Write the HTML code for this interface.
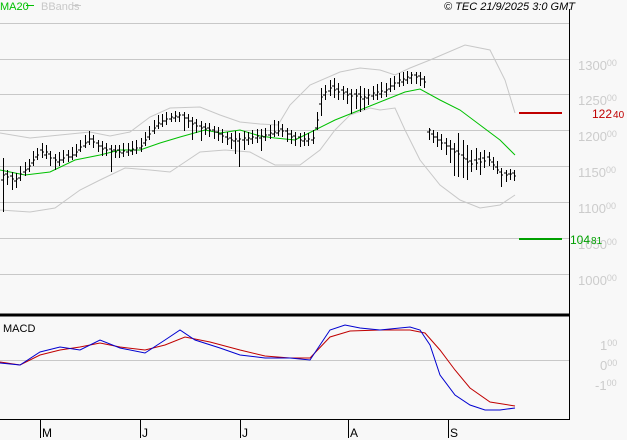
<!DOCTYPE html>
<html><head><meta charset="utf-8"><style>
html,body{margin:0;padding:0;background:#f8f8f8;}
svg{display:block;font-family:"Liberation Sans",sans-serif;}
</style></head><body>
<svg width="627" height="440" viewBox="0 0 627 440" xmlns="http://www.w3.org/2000/svg">
<rect width="627" height="440" fill="#f8f8f8"/>
<g stroke="#c8c8c8" stroke-width="1" shape-rendering="crispEdges">
<line x1="0" y1="23.5" x2="569" y2="23.5"/>
<line x1="0" y1="59.5" x2="569" y2="59.5"/>
<line x1="0" y1="94.5" x2="569" y2="94.5"/>
<line x1="0" y1="130.5" x2="569" y2="130.5"/>
<line x1="0" y1="166.5" x2="569" y2="166.5"/>
<line x1="0" y1="202.5" x2="569" y2="202.5"/>
<line x1="0" y1="238.5" x2="569" y2="238.5"/>
<line x1="0" y1="274.5" x2="569" y2="274.5"/>
<line x1="0" y1="360.5" x2="569" y2="360.5"/>
</g>
<g fill="#cccccc" font-size="13">
<text x="578" y="70">1300<tspan font-size="9" dy="-4">00</tspan></text>
<text x="578" y="105">1250<tspan font-size="9" dy="-4">00</tspan></text>
<text x="578" y="141">1200<tspan font-size="9" dy="-4">00</tspan></text>
<text x="578" y="177">1150<tspan font-size="9" dy="-4">00</tspan></text>
<text x="578" y="213">1100<tspan font-size="9" dy="-4">00</tspan></text>
<text x="578" y="249">1050<tspan font-size="9" dy="-4">00</tspan></text>
<text x="578" y="285">1000<tspan font-size="9" dy="-4">00</tspan></text>
<text x="600" y="350">1<tspan font-size="9" dy="-4">00</tspan></text>
<text x="600" y="370">0<tspan font-size="9" dy="-4">00</tspan></text>
<text x="595" y="390">-1<tspan font-size="9" dy="-4">00</tspan></text>
</g>
<text x="0" y="10" font-size="11" fill="#00c000">MA20</text>
<line x1="26" y1="5.5" x2="34" y2="5.5" stroke="#00c000"/>
<text x="41" y="10" font-size="11" fill="#c8c8c8">BBands</text>
<line x1="73" y1="5.5" x2="81" y2="5.5" stroke="#c8c8c8"/>
<text x="575" y="10" font-size="11" font-style="italic" fill="#000" text-anchor="end">© TEC 21/9/2025 3:0 GMT</text>
<line x1="569.5" y1="9" x2="569.5" y2="420" stroke="#000"/>
<line x1="0" y1="315" x2="570" y2="315" stroke="#000" stroke-width="3"/>
<line x1="0" y1="419.5" x2="570" y2="419.5" stroke="#000"/>
<text x="3" y="332" font-size="11" fill="#000">MACD</text>
<g stroke="#000"><line x1="40.5" y1="419" x2="40.5" y2="438"/><line x1="140.5" y1="419" x2="140.5" y2="438"/><line x1="240.5" y1="419" x2="240.5" y2="438"/><line x1="348.5" y1="419" x2="348.5" y2="438"/><line x1="448.5" y1="419" x2="448.5" y2="438"/></g>
<g font-size="12" fill="#000"><text x="42" y="437">M</text><text x="142" y="437">J</text><text x="242" y="437">J</text><text x="350" y="437">A</text><text x="450" y="437">S</text></g>
<line x1="519" y1="113" x2="562" y2="113" stroke="#c00000" stroke-width="2"/>
<text x="592" y="118" font-size="12" fill="#c00000">122<tspan font-size="10" dx="1">40</tspan></text>
<line x1="519" y1="239" x2="562" y2="239" stroke="#00a000" stroke-width="2"/>
<text x="570" y="244" font-size="12" fill="#00a000">104<tspan font-size="10" dx="1">81</tspan></text>
<polyline fill="none" stroke="#c8c8c8" points="0,133 30,138 60,135 90,132 110,136 130,132 150,117 170,108 200,107 220,115 240,122 260,124 278,125 290,105 310,85 340,72 360,68 380,70 395,75 410,68 430,60 465,45 490,50 505,80 515,113"/>
<polyline fill="none" stroke="#c8c8c8" points="0,210 30,212 55,208 80,190 100,180 125,168 150,170 170,172 200,152 225,150 250,152 265,160 275,165 300,165 320,150 335,130 350,115 370,108 380,110 395,108 405,130 420,160 440,185 460,200 480,208 500,205 515,195"/>
<polyline fill="none" stroke="#00c000" points="0,170 25,175 50,172 75,160 100,155 120,150 140,150 160,143 180,137 205,130 220,133 240,130 260,136 275,138 295,140 315,130 335,120 360,110 385,100 405,92 420,89 440,100 460,110 480,125 500,140 515,155"/>
<path fill="none" stroke="#000" stroke-width="1" shape-rendering="crispEdges" d="
M3.5 158V212M1 180h2M3 175h2
M7.5 170V185M5 174h2M7 177h2
M12.5 172V190M10 176h2M12 179h2
M16.5 173V188M14 181h2M16 179h2
M20.5 166V181M18 178h2M20 174h2
M25.5 162V176M23 172h2M25 170h2
M29.5 159V172M27 169h2M29 166h2
M33.5 151V166M31 163h2M33 160h2
M37.5 148V160M35 157h2M37 155h2
M42.5 143V158M40 150h2M42 152h2
M46.5 145V159M44 155h2M46 152h2
M50.5 151V166M48 154h2M50 158h2
M55.5 154V170M53 158h2M55 160h2
M59.5 152V166M57 162h2M59 160h2
M63.5 150V163M61 160h2M63 158h2
M68.5 150V162M66 155h2M68 157h2
M72.5 147V160M70 157h2M72 155h2
M76.5 144V157M74 155h2M76 152h2
M80.5 140V152M78 150h2M80 147h2
M85.5 135V148M83 146h2M85 143h2
M89.5 131V145M87 142h2M89 139h2
M93.5 135V148M91 139h2M93 142h2
M98.5 140V152M96 143h2M98 146h2
M102.5 141V156M100 146h2M102 149h2
M106.5 143V156M104 148h2M106 150h2
M111.5 145V172M109 149h2M111 151h2
M115.5 145V158M113 150h2M115 152h2
M119.5 145V158M117 150h2M119 152h2
M123.5 143V157M121 153h2M123 151h2
M128.5 143V156M126 152h2M128 150h2
M132.5 141V155M130 151h2M132 149h2
M136.5 140V154M134 150h2M136 148h2
M141.5 138V152M139 148h2M141 146h2
M145.5 132V146M143 143h2M145 140h2
M149.5 126V140M147 137h2M149 134h2
M154.5 120V134M152 131h2M154 128h2
M158.5 115V129M156 126h2M158 123h2
M162.5 114V127M160 124h2M162 121h2
M166.5 112V125M164 121h2M166 119h2
M171.5 113V122M169 119h2M171 117h2
M175.5 111V122M173 118h2M175 116h2
M179.5 112V122M177 117h2M179 115h2
M184.5 112V131M182 115h2M184 118h2
M188.5 114V128M186 118h2M188 121h2
M192.5 117V140M190 121h2M192 124h2
M196.5 119V133M194 123h2M196 126h2
M201.5 121V141M199 126h2M201 128h2
M205.5 123V135M203 127h2M205 129h2
M209.5 123V137M207 128h2M209 130h2
M214.5 126V139M212 130h2M214 132h2
M218.5 127V141M216 132h2M218 134h2
M222.5 129V143M220 134h2M222 136h2
M227.5 132V145M225 137h2M227 139h2
M231.5 133V149M229 138h2M231 140h2
M235.5 131V154M233 141h2M235 139h2
M239.5 133V167M237 141h2M239 139h2
M244.5 131V150M242 140h2M244 138h2
M248.5 132V145M246 140h2M248 138h2
M252.5 130V144M250 139h2M252 137h2
M257.5 129V143M255 138h2M257 136h2
M261.5 129V151M259 138h2M261 136h2
M265.5 128V141M263 137h2M265 135h2
M270.5 125V139M268 135h2M270 133h2
M274.5 120V137M272 134h2M274 132h2
M278.5 121V136M276 133h2M278 131h2
M282.5 124V137M280 129h2M282 131h2
M287.5 128V142M285 131h2M287 134h2
M291.5 130V144M289 134h2M291 137h2
M295.5 132V146M293 136h2M295 139h2
M300.5 133V147M298 137h2M300 140h2
M304.5 132V146M302 141h2M304 139h2
M308.5 133V146M306 141h2M308 139h2
M313.5 130V144M311 140h2M313 138h2
M317.5 112V130M315 128h2M317 120h2
M321.5 88V116M319 104h2M321 97h2
M325.5 85V100M323 95h2M325 92h2
M330.5 80V96M328 91h2M330 88h2
M334.5 78V98M332 86h2M334 90h2
M338.5 83V100M336 89h2M338 92h2
M343.5 86V100M341 90h2M343 93h2
M347.5 88V104M345 92h2M347 95h2
M351.5 89V114M349 94h2M351 96h2
M356.5 89V109M354 94h2M356 96h2
M360.5 86V112M358 94h2M360 97h2
M364.5 88V110M362 99h2M364 97h2
M368.5 89V105M366 98h2M368 95h2
M373.5 86V100M371 96h2M373 93h2
M377.5 84V100M375 95h2M377 92h2
M381.5 82V98M379 94h2M381 91h2
M386.5 83V97M384 92h2M386 90h2
M390.5 78V92M388 89h2M390 86h2
M394.5 76V90M392 86h2M394 83h2
M399.5 73V87M397 83h2M399 80h2
M403.5 72V86M401 82h2M403 79h2
M407.5 71V84M405 80h2M407 77h2
M411.5 72V84M409 78h2M411 75h2
M416.5 72V84M414 75h2M416 77h2
M420.5 72V86M418 76h2M420 79h2
M424.5 76V88M422 79h2M424 82h2
M429.5 128V140M427 132h2M429 130h2
M433.5 130V143M431 134h2M433 137h2
M437.5 132V147M435 137h2M437 140h2
M441.5 134V150M439 140h2M441 143h2
M446.5 138V155M444 143h2M446 146h2
M450.5 140V163M448 146h2M450 149h2
M454.5 143V176M452 149h2M454 152h2
M458.5 133V177M456 151h2M458 154h2
M463.5 140V178M461 155h2M463 158h2
M467.5 145V180M465 159h2M467 162h2
M471.5 150V172M469 161h2M471 164h2
M476.5 148V170M474 160h2M476 163h2
M480.5 152V175M478 159h2M480 162h2
M484.5 150V168M482 158h2M484 161h2
M489.5 152V166M487 157h2M489 160h2
M493.5 157V170M491 162h2M493 165h2
M497.5 161V174M495 167h2M497 170h2
M501.5 168V187M499 172h2M501 175h2
M506.5 170V182M504 173h2M506 175h2
M510.5 169V180M508 174h2M510 174h2
M514.5 170V181M512 173h2M514 176h2"/>
<polyline fill="none" stroke="#c00000" points="0,362 20,365 40,355 60,350 80,347 100,343 120,347 145,350 165,345 185,337 210,342 240,350 265,356 290,358 310,358 330,337 350,331 380,330 410,330 425,333 440,350 455,370 470,388 490,402 515,406"/>
<polyline fill="none" stroke="#0000d0" points="0,363 20,365 40,352 60,347 80,350 100,340 120,348 145,353 165,340 180,330 195,340 220,348 240,355 265,358 290,358 310,360 320,345 330,330 345,325 360,328 380,330 410,327 420,330 430,345 440,375 455,395 470,405 485,410 500,410 515,408"/>
</svg>
</body></html>
